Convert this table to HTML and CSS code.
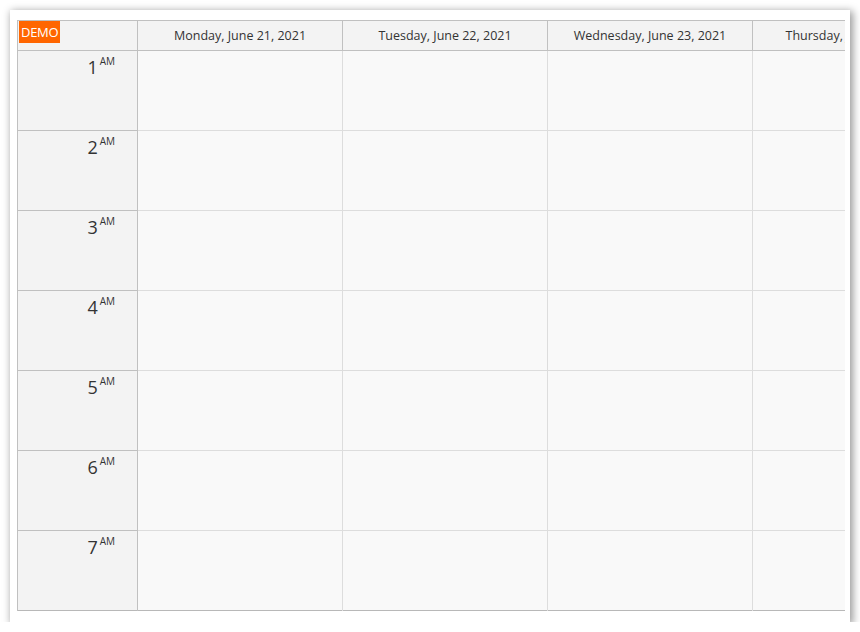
FILE: index.html
```html
<!DOCTYPE html>
<html>
<head>
<meta charset="utf-8">
<link rel="stylesheet" href="styles.css">
</head>
<body>
<div class="card">
  <div class="cal">
    <div class="rowheaders">
      <div class="corner"><span class="demo">DEMO</span></div>
      <div class="hour"><span class="num">1</span><span class="ampm">AM</span></div>
      <div class="hour"><span class="num">2</span><span class="ampm">AM</span></div>
      <div class="hour"><span class="num">3</span><span class="ampm">AM</span></div>
      <div class="hour"><span class="num">4</span><span class="ampm">AM</span></div>
      <div class="hour"><span class="num">5</span><span class="ampm">AM</span></div>
      <div class="hour"><span class="num">6</span><span class="ampm">AM</span></div>
      <div class="hour"><span class="num">7</span><span class="ampm">AM</span></div>
    </div>
    <div class="days">
      <div class="day">
        <div class="dayhead">Monday, June 21, 2021</div>
        <div class="cell"></div><div class="cell"></div><div class="cell"></div><div class="cell"></div><div class="cell"></div><div class="cell"></div><div class="cell"></div>
      </div>
      <div class="day">
        <div class="dayhead">Tuesday, June 22, 2021</div>
        <div class="cell"></div><div class="cell"></div><div class="cell"></div><div class="cell"></div><div class="cell"></div><div class="cell"></div><div class="cell"></div>
      </div>
      <div class="day">
        <div class="dayhead">Wednesday, June 23, 2021</div>
        <div class="cell"></div><div class="cell"></div><div class="cell"></div><div class="cell"></div><div class="cell"></div><div class="cell"></div><div class="cell"></div>
      </div>
      <div class="day">
        <div class="dayhead">Thursday, June 24, 2021</div>
        <div class="cell"></div><div class="cell"></div><div class="cell"></div><div class="cell"></div><div class="cell"></div><div class="cell"></div><div class="cell"></div>
      </div>
    </div>
  </div>
</div>
</body>
</html>
```
FILE: styles.css
```css
html, body {
  margin: 0;
  padding: 0;
  background: #ffffff;
}
body {
  font-family: "Open Sans", "Noto Sans", sans-serif;
  color: #333333;
}
.card {
  margin: 10px 0 0 10px;
  width: 840px;
  height: 612px;
  box-sizing: border-box;
  padding: 10px 5px 12px 7px;
  background: #ffffff;
  box-shadow: 2px 2px 8px 1px rgba(0, 0, 0, 0.4);
}
.cal {
  display: flex;
  width: 828px;
  height: 591px;
  box-sizing: border-box;
  border-top: 1px solid #c0c0c0;
  border-left: 1px solid #c0c0c0;
  overflow: hidden;
}
.rowheaders {
  flex: 0 0 120px;
  display: flex;
  flex-direction: column;
  background: #f3f3f3;
  border-right: 1px solid #c0c0c0;
  box-sizing: border-box;
}
.corner {
  position: relative;
  height: 30px;
  box-sizing: border-box;
  border-bottom: 1px solid #c0c0c0;
}
.demo {
  position: absolute;
  left: 1px;
  top: 0;
  background: #ff6600;
  color: #ffffff;
  font-size: 13px;
  line-height: 22px;
  padding: 0 2px;
  letter-spacing: -0.3px;
}
.hour {
  height: 80px;
  box-sizing: border-box;
  border-bottom: 1px solid #c0c0c0;
  display: flex;
  justify-content: flex-end;
  align-items: flex-start;
  padding: 3px 22px 0 0;
}
.hour:last-child {
  border-bottom-color: #b8b8b8;
}
.num {
  font-size: 18px;
  line-height: 26px;
}
.ampm {
  font-size: 10px;
  line-height: 14px;
  margin-left: 2px;
}
.days {
  flex: 1;
  display: flex;
  overflow: hidden;
}
.day {
  flex: 0 0 205px;
  display: flex;
  flex-direction: column;
  box-sizing: border-box;
  border-right: 1px solid #dddddd;
  background: #f9f9f9;
}
.dayhead {
  height: 30px;
  box-sizing: border-box;
  border-bottom: 1px solid #c0c0c0;
  border-right: 1px solid #c0c0c0;
  margin-right: -1px;
  background: #f3f3f3;
  font-size: 12.5px;
  line-height: 30px;
  text-align: center;
  white-space: nowrap;
}
.cell {
  height: 80px;
  box-sizing: border-box;
  border-bottom: 1px solid #dddddd;
}
.cell:last-child {
  border-bottom-color: #b8b8b8;
}
```
